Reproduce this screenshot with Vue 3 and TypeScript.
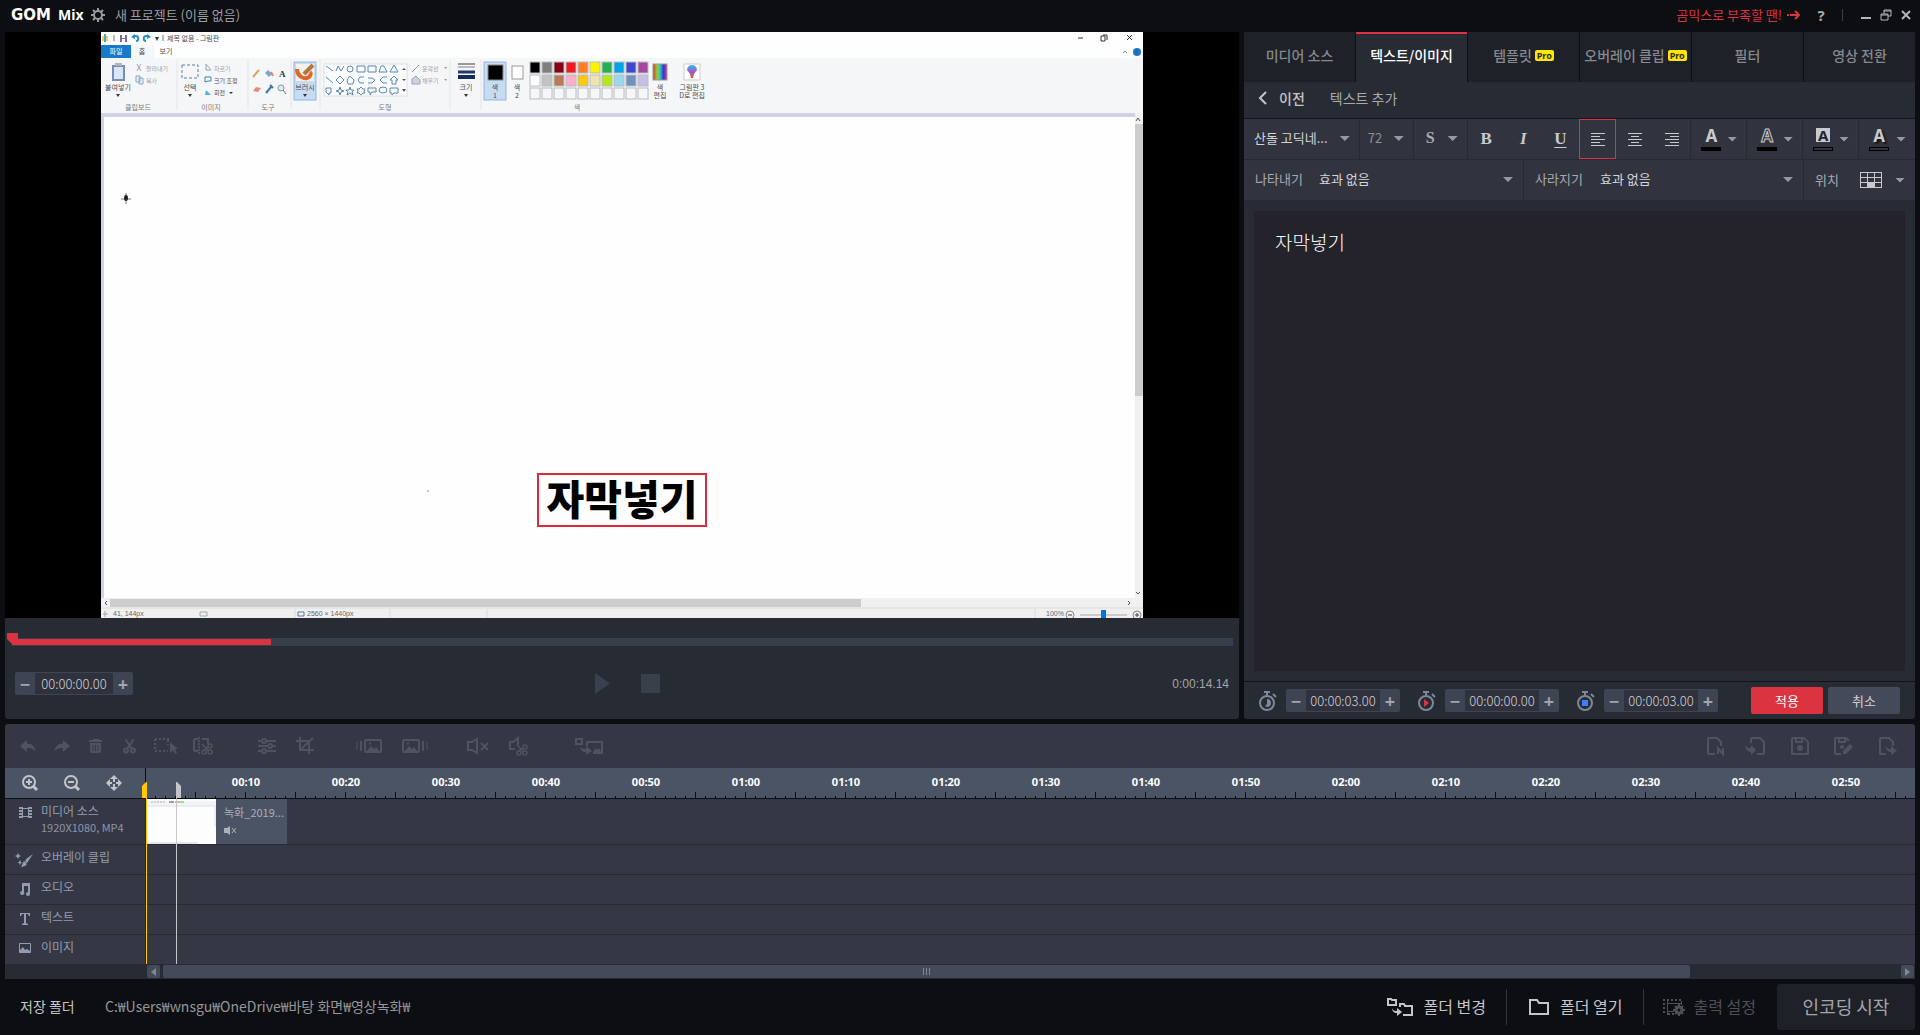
<script setup lang="ts">
import { ref } from 'vue'

interface Icon { w: number; h: number; body: string }

const scissors = '<circle cx="3" cy="11.5" r="2" /><circle cx="10" cy="11.5" r="2" /><path d="M4 10 10.500 0.500M9 10 2.500 0.500" />'
const smallScissors = '<g stroke-width="1.500"><circle cx="11" cy="16" r="2"/><circle cx="17" cy="16" r="2"/><circle cx="17" cy="10" r="2"/><path d="M9 8 16 15M10 15 15 10.500"/></g>'
const picture = '<rect x="1" y="1" width="16" height="12" rx="1"/><path class="fill" d="M3 12 7 7l3 3 2-2 3 4zM5 3.500h2v2H5z"/>'

const icons: Record<string, Icon> = {
  gear: { w: 14, h: 14, body: '<circle cx="7" cy="7" r="4" stroke-width="2"/><path stroke-width="2" d="M7 0v3M7 11v3M0 7h3M11 7h3M2 2l2 2M10 10l2 2M2 12l2-2M10 4l2-2"/>' },
  undo: { w: 16, h: 14, body: '<path class="fill" d="M0 7 7 1v3.500c5 0 8 3 8.500 8C13 9.500 11 9 7 9v4z"/>' },
  redo: { w: 16, h: 14, body: '<path class="fill" d="M16 7 9 1v3.500c-5 0-8 3-8.500 8C3 9.500 5 9 9 9v4z"/>' },
  trash: { w: 14, h: 14, body: '<path class="fill" d="M4 0h6v1h3v2H0V1h4zM1 4h11v8a2 2 0 0 1-2 2H3a2 2 0 0 1-2-2z"/><path class="cut" d="M4 6v6M6.500 6v6M9 6v6"/>' },
  scissors: { w: 14, h: 14, body: scissors },
  pick: { w: 24, h: 18, body: '<path stroke-dasharray="2 2" d="M1 2h14M1 14h13M1 2v12M14 3v5"/><path class="fill" d="M16 5v11l3-3 2 4 2-1-2-4h3z"/>' },
  split: { w: 20, h: 18, body: '<path d="M5 2H2a1 1 0 0 0-1 1v10a1 1 0 0 0 1 1h3M9 2h6v5"/><path stroke-dasharray="2 1" d="M6 0v18"/><g transform="translate(0 -1)">' + smallScissors + '</g>' },
  sliders: { w: 18, h: 16, body: '<path d="M0 3h4M8 3h10M0 8h10M14 8h4M0 13h4M8 13h10"/><circle cx="6" cy="3" r="2"/><circle cx="12" cy="8" r="2"/><circle cx="6" cy="13" r="2"/>' },
  crop: { w: 18, h: 18, body: '<path d="M4 0v13h14M0 4h13v13M4 13 17 1"/>' },
  fadeIn: { w: 26, h: 14, body: '<g transform="translate(8 0)">' + picture + '</g><path d="M5 2v10"/><path stroke-width="1" d="M1 3v8"/>' },
  fadeOut: { w: 26, h: 14, body: picture + '<path d="M21 2v10"/><path stroke-width="1" d="M25 3v8"/>' },
  mute: { w: 22, h: 16, body: '<path d="M1 4h4l5-3v14l-5-3H1zM14 5l7 7M21 5l-7 7"/>' },
  muteCut: { w: 20, h: 18, body: '<path d="M7 12H2V5h3l5-4v7"/>' + smallScissors },
  swap: { w: 28, h: 16, body: '<path d="M1 1h6v5H1zM12 8V4h15v11h-9"/><path class="fill" d="M5 9c2 2 4 2 6 2V8l6 5-6 4v-3c-3 0-5-1-6-5zM18 14l3-4 1 2 2-2 2 4z"/>' },
  docNew: { w: 18, h: 18, body: '<path d="M8 17H2a1 1 0 0 1-1-1V2a1 1 0 0 1 1-1h8l4 4v4M11 17v-6l5 6v-6"/>' },
  docIn: { w: 20, h: 18, body: '<path d="M6 6V2a1 1 0 0 1 1-1h8l4 4v11a1 1 0 0 1-1 1h-6"/><path class="fill" d="M0 8c2 3 4 3 6 3V8l5 5-5 5v-3c-3 0-5-2-6-7z"/>' },
  save: { w: 18, h: 18, body: '<path d="M2 1h11l4 4v11a1 1 0 0 1-1 1H2a1 1 0 0 1-1-1V2a1 1 0 0 1 1-1zM5 1v4h6V1"/><circle class="fill" cx="9" cy="11" r="3"/>' },
  saveAs: { w: 20, h: 18, body: '<path d="M7 17H2a1 1 0 0 1-1-1V2a1 1 0 0 1 1-1h10l3 3M5 1v4h6V1"/><circle class="fill" cx="8" cy="10" r="2"/><path class="fill" d="m9 14 7-7 3 3-7 7H9z"/>' },
  docOut: { w: 18, h: 18, body: '<path d="M7 17H2a1 1 0 0 1-1-1V2a1 1 0 0 1 1-1h8l4 4v4"/><path class="fill" d="M6 9c2 3 4 3 6 3V9l6 5-6 4v-3c-3 0-5-2-6-6z"/>' },
  zoomIn: { w: 16, h: 16, body: '<circle cx="7" cy="7" r="6"/><path stroke-width="3" d="m11 11 4 4"/><path d="M7 4v6M4 7h6"/>' },
  zoomOut: { w: 16, h: 16, body: '<circle cx="7" cy="7" r="6"/><path stroke-width="3" d="m11 11 4 4"/><path d="M4 7h6"/>' },
  spread: { w: 16, h: 16, body: '<path class="fill" d="M8 0 4 4h3v3h2V4h3zM8 16l-4-4h3V9h2v3h3zM0 8l4-4v3h2v2H4v3zM16 8l-4-4v3h-2v2h2v3z"/>' },
  film: { w: 13, h: 11, body: '<g stroke-width="1"><path d="M3.500 0v11M9.500 0v11M3 1.500h7M3 9.500h7"/><path stroke-width="2" d="M0 1h4M0 4h3M0 7h3M0 10h4M9 1h4M10 4h3M10 7h3M9 10h4" /></g>' },
  brush: { w: 18, h: 14, body: '<path class="fill" d="m18 1-7 5-1 3 2 1zM9 8l3 3c-1 2-4 3-6 3 1-1 1-4 3-6zM3 0l1 2 2 1-2 1-1 2-1-2-2-1 2-1zM5 7l1 2 1 0-1 1-1 2-1-2-2-1 2 0z"/>' },
  note: { w: 12, h: 13, body: '<path class="fill" d="M3 0h8v11a2 2 0 1 1-2-2V3H5v6a2 2 0 1 1-2-1z"/>' },
  type: { w: 12, h: 12, body: '<path class="fill" d="M1 0h10v3h-1l-1-2H7v9l2 1v1H3v-1l2-1V1H3L2 3H1z"/>' },
  image: { w: 12, h: 10, body: '<path stroke-width="1" d="M.5.5h11v9H.5z"/><path class="fill" d="M1 9V7l3-3 2 3 2-1 3 2v1z"/>' },
  folders: { w: 26, h: 18, body: '<path d="M1 1h3l1 1h4v5H1zM13 9V6h4l1 2h7v9h-9"/><path class="fill" d="M5 10c1 3 3 3 5 3v-3l5 4-5 4v-3c-3 0-5-2-5-5z"/>' },
  folder: { w: 20, h: 16, body: '<path d="M1 1h7l2 3h9v11H1z"/>' },
  output: { w: 22, h: 16, body: '<path stroke-width="1" d="M4.500 0v16M4 4.500h15M4 12.500h7M18.500 2v4"/><path stroke-dasharray="2 2" d="M1 0v16M4 1h16M5 15h6"/><circle cx="16" cy="11" r="3" stroke-width="3"/><path d="M16 5v3M16 14v3M10 11h3M19 11h3M12 7l2 2M18 13l2 2M20 7l-2 2M14 13l-2 2"/>' },
}

const tabs = [
  { label: '미디어 소스', pro: false },
  { label: '텍스트/이미지', pro: false },
  { label: '템플릿', pro: true },
  { label: '오버레이 클립', pro: true },
  { label: '필터', pro: false },
  { label: '영상 전환', pro: false },
]
const activeTab = ref('텍스트/이미지')

const alignments = [
  { name: '왼쪽 정렬', d: 'M0 1h14M0 4h9M0 7h14M0 10h9M0 13h14' },
  { name: '가운데 정렬', d: 'M0 1h14M3 4h8M0 7h14M3 10h8M0 13h14' },
  { name: '오른쪽 정렬', d: 'M0 1h14M5 4h9M0 7h14M5 10h9M0 13h14' },
]
const align = ref('왼쪽 정렬')

const colorTools = [
  { name: '글자 색', cls: 'plain', filled: true },
  { name: '윤곽선 색', cls: 'outlined', filled: true },
  { name: '배경 색', cls: 'boxed', filled: false },
  { name: '그림자 색', cls: 'shadowed', filled: false },
]

const caption = ref('자막넣기')
const position = ref('00:00:00.00')
const timers = ref([
  { name: '지속 시간', kind: 'half', value: '00:00:03.00' },
  { name: '시작 시간', kind: 'start', value: '00:00:00.00' },
  { name: '종료 시간', kind: 'end', value: '00:00:03.00' },
])

const toolGroups = [
  { cls: 'g34', items: [['undo', '실행 취소'], ['redo', '다시 실행'], ['trash', '삭제'], ['scissors', '자르기']] },
  { cls: 'g37', items: [['pick', '영역 선택'], ['split', '분할']] },
  { cls: 'g38', items: [['sliders', '조정'], ['crop', '크롭']] },
  { cls: 'g46', items: [['fadeIn', '페이드 인'], ['fadeOut', '페이드 아웃']] },
  { cls: 'g40', items: [['mute', '음소거'], ['muteCut', '오디오 분리']] },
  { cls: 'g40 far', items: [['swap', '교체']] },
  { cls: 'g39', items: [['docNew', '새 프로젝트'], ['docIn', '불러오기']] },
  { cls: 'g44', items: [['save', '저장'], ['saveAs', '다른 이름으로 저장'], ['docOut', '내보내기']] },
]

const marks = Array.from({ length: 17 }, (_, i) => {
  const s = (i + 1) * 10
  return `${String(Math.floor(s / 60)).padStart(2, '0')}:${String(s % 60).padStart(2, '0')}`
})

const tracks = [
  { icon: 'brush', label: '오버레이 클립' },
  { icon: 'note', label: '오디오' },
  { icon: 'type', label: '텍스트' },
  { icon: 'image', label: '이미지' },
]

const palette = [
  ['#000', '#7f7f7f', '#880015', '#ed1c24', '#ff7f27', '#fff200', '#22b14c', '#00a2e8', '#3f48cc', '#a349a4'],
  ['#fff', '#c3c3c3', '#b97a57', '#ffaec9', '#ffc90e', '#efe4b0', '#b5e61d', '#99d9ea', '#7092be', '#c8bfe7'],
  ['#f6f7f8', '#f6f7f8', '#f6f7f8', '#f6f7f8', '#f6f7f8', '#f6f7f8', '#f6f7f8', '#f6f7f8', '#f6f7f8', '#f6f7f8'],
]
</script>

<template>
  <div class="app">
    <header class="titlebar">
      <div class="brand"><b class="gom">GOM</b><b class="mix">Mix</b></div>
      <button class="bare gear" aria-label="설정"><svg class="ico" width="14" height="14" viewBox="0 0 14 14" v-html="icons.gear.body" /></button>
      <h1>새 프로젝트 (이름 없음)</h1>
      <a class="promo" href="#">곰믹스로 부족할 땐!
        <svg width="13" height="10" viewBox="0 0 13 10"><path d="M0 5h2M3 5h9M8 1l4 4-4 4" fill="none" stroke="#dc3341" stroke-width="2" /></svg>
      </a>
      <button class="bare help" aria-label="도움말">?</button>
      <i class="rule" />
      <div class="winbtns">
        <button class="bare" aria-label="최소화"><svg width="12" height="12" viewBox="0 0 12 12"><path d="M1 9h10" stroke-width="2" /></svg></button>
        <button class="bare" aria-label="이전 크기로"><svg width="12" height="12" viewBox="0 0 12 12"><path d="M4 5V1h7v6H8M1 5h7v6H1zM4 2h7M1 6h7" /></svg></button>
        <button class="bare" aria-label="닫기"><svg width="12" height="12" viewBox="0 0 12 12"><path d="m2 2 8 8M10 2l-8 8" stroke-width="2" /></svg></button>
      </div>
    </header>

    <main class="workspace">
      <section class="player">
        <div class="stage">
          <svg class="frame" viewBox="101 32 1042 586">
            <rect x="101" y="32" width="1042" height="586" fill="#fefefe" />
            <!-- window title row -->
            <path d="M102 36h6v5h-6z" fill="#f2c66b" /><path d="M104 34h2v8h-2z" fill="#4aa3c9" />
            <path d="M114 35v6M163 35v6" stroke="#777" stroke-width="1" />
            <path d="M120 35h7v7h-7z" fill="#7b68a8" /><path d="M122 35h3v3h-3zM122 39h3v3h-3z" fill="#fff" />
            <path d="M133 36h3c3 0 3 5 0 5M149 36h-3c-3 0-3 5 0 5" fill="none" stroke="#2390d0" stroke-width="2" />
            <path d="M131 37l4-3v5zM151 37l-4-3v5z" fill="#2390d0" /><path d="M155 37h4l-2 4z" fill="#333" />
            <text x="167" y="41" class="t7">제목 없음 - 그림판</text>
            <path d="M1078 38h5M1101 36h4v5h-4zM1103 35h4v5M1127 35l5 5M1132 35l-5 5" fill="none" stroke="#333" />
            <path d="M1123 53l2-2 2 2" fill="none" stroke="#888" /><circle cx="1137" cy="52" r="4" fill="#1979ca" /><text x="1135" y="54" class="t6" fill="#fff">?</text>
            <rect x="101" y="45" width="30" height="13" fill="#1979ca" />
            <text x="116" y="54" class="t7 mid" style="fill:#fff">파일</text>
            <rect x="131" y="45" width="23" height="13" fill="#f5f6f7" />
            <text x="142" y="54" class="t7 mid">홈</text><text x="166" y="54" class="t7 mid">보기</text>
            <!-- ribbon -->
            <rect x="101" y="58" width="1042" height="56" fill="#f5f6f7" />
            <path d="M177 60v50M248 60v50M291 60v50M320 60v50M450 60v50M481 60v50" stroke="#e4e6ea" />
            <rect x="112" y="65" width="13" height="16" fill="#7b8fb5" /><rect x="114" y="67" width="9" height="12" fill="#dbe6f8" /><path d="M115 63h7v3h-7z" fill="#aeb6c4" />
            <text x="118" y="90" class="t7 mid">붙여넣기</text><path d="M116 94h4l-2 3z" fill="#333" />
            <path d="M137 64l4 7M141 64l-4 7" stroke="#98a3b3" /><text x="146" y="71" class="t6 dim">잘라내기</text>
            <path d="M136 76h4v6h-4zM139 78h4v6h-4z" fill="#e5effa" stroke="#8ea6c4" /><text x="146" y="83" class="t6 dim">복사</text>
            <text x="138" y="110" class="t7 mid gr">클립보드</text>
            <rect x="182" y="65" width="16" height="13" fill="none" stroke="#5b7fa6" stroke-dasharray="3 2" />
            <text x="190" y="90" class="t7 mid">선택</text><path d="M188 94h4l-2 3z" fill="#333" />
            <path d="M206 64v6h5M206 64l5 6" stroke="#8fa5c2" fill="none" /><text x="214" y="71" class="t6 dim">자르기</text>
            <path d="M205 82v-5h6v4h-3z" fill="none" stroke="#3d84bd" /><text x="214" y="83" class="t6">크기 조정</text>
            <path d="M205 95l1-5 5 5z" fill="#5ab0e0" /><text x="214" y="95" class="t6">회전</text><path d="M229 92h4l-2 2z" fill="#333" />
            <text x="211" y="110" class="t7 mid gr">이미지</text>
            <path d="M253 77l6-7" stroke="#d6a75a" stroke-width="2" /><path d="M265 73l3-3 4 4-3 3z" fill="#7aa7cf" /><path d="M271 72l2 4" stroke="#d78a64" stroke-width="2" />
            <text x="279" y="77" style="font:bold 9px 'Liberation Serif',serif;fill:#25384f">A</text>
            <path d="M253 91l3-4 5 1-3 4z" fill="#e48a86" /><path d="M266 93l5-6M270 85l3 3" stroke="#3c76ae" stroke-width="2" />
            <circle cx="281" cy="88" r="3" fill="#dcecf6" stroke="#8a98a8" /><path d="M283 90l3 4" stroke="#8a7350" />
            <text x="268" y="110" class="t7 mid gr">도구</text>
            <rect x="294" y="62" width="22" height="38" fill="#c6dcf3" stroke="#93b5da" />
            <rect x="296" y="64" width="18" height="17" fill="#f4f0ea" />
            <path d="M297 69c0 7 6 10 10 9s4-5 3-6" fill="none" stroke="#e0662a" stroke-width="4" /><path d="M304 74l9-9" stroke="#b0763c" stroke-width="4" />
            <text x="305" y="90" class="t7 mid">브러시</text><path d="M303 94h4l-2 3z" fill="#333" />
            <rect x="324" y="64" width="83" height="32" fill="#fafbfc" stroke="#dcdfe4" />
            <g fill="none" stroke="#5c88ad">
              <path d="M326 66l7 5M336 71l2-5 3 5 3-5M357 66h8v6h-8zM368 66h8v6h-8zM379 72l2-6h3l3 6zM390 72l4-7 4 7z" /><circle cx="350" cy="69" r="3" />
              <path d="M326 77l7 6M340 76l4 4-4 4-4-4zM347 80l3-4 4 4-1 4h-5zM364 77h-4l-2 3 2 3h4M368 78h4l3 2-3 3h-4M387 77h-4l-3 3 3 3h4M394 76l4 4h-2v4h-4v-4h-2z" />
              <path d="M326 88h5v5h-2v2l-3-3zM340 87l1 3 3 1-3 1-1 3-1-3-3-1 3-1zM350 87l1 3h3l-2 2 1 3-3-2-3 2 1-3-2-2h3zM361 87l2 2h2l-1 2 1 2h-2l-2 2-2-2h-2l1-2-1-2h2zM368 88h8v4h-4l-2 3v-3h-2zM390 88h8v5h-4l-2 2v-2h-2z" /><ellipse cx="383" cy="90" rx="4" ry="3" />
            </g>
            <path d="M402 70l2-2 2 2zM402 79h4l-2 2zM402 89h4l-2 3z" fill="#555" />
            <path d="M412 72l7-7" stroke="#8ba1b8" /><text x="422" y="71" class="t6 dim">윤곽선</text>
            <path d="M412 79l4-3 4 4v4h-8z" fill="#ccd3dc" stroke="#9aa6b4" /><text x="422" y="83" class="t6 dim">채우기</text>
            <path d="M444 67h3l-1 2zM444 79h3l-1 2z" fill="#999" />
            <text x="385" y="110" class="t7 mid gr">도형</text>
            <path d="M458 64h17" stroke="#999" stroke-width="2" /><path d="M458 67h17" stroke="#bbb" stroke-width="2" /><path d="M458 72h17" stroke="#1e3a66" stroke-width="3" /><path d="M458 77h17" stroke="#132b55" stroke-width="4" />
            <text x="466" y="90" class="t7 mid">크기</text><path d="M464 94h4l-2 3z" fill="#333" />
            <rect x="484" y="62" width="22" height="38" fill="#c6dcf3" stroke="#93b5da" /><rect x="488" y="65" width="15" height="15" stroke="#8a8a8a" />
            <text x="495" y="90" class="t7 mid">색</text><text x="495" y="98" class="t7 mid">1</text>
            <rect x="512" y="66" width="11" height="13" fill="#fff" stroke="#999" />
            <text x="517" y="90" class="t7 mid">색</text><text x="517" y="98" class="t7 mid">2</text>
            <g v-for="(row, r) in palette" :key="r">
              <rect v-for="(c, i) in row" :key="i" :x="530 + i * 12" :y="62 + r * 13" width="10" height="11" :fill="c" stroke="#b8bbc0" />
            </g>
            <text x="577" y="110" class="t7 mid gr">색</text>
            <defs>
              <linearGradient id="rainbow"><stop offset="0" stop-color="#d33" /><stop offset=".3" stop-color="#9c3" /><stop offset=".5" stop-color="#2cc" /><stop offset=".75" stop-color="#43c" /><stop offset="1" stop-color="#c39" /></linearGradient>
              <linearGradient id="cone" x2="0" y2="1"><stop offset="0" stop-color="#2bbdf0" /><stop offset=".5" stop-color="#a05ad0" /><stop offset="1" stop-color="#e8542c" /></linearGradient>
            </defs>
            <rect x="653" y="64" width="14" height="16" fill="url(#rainbow)" stroke="#999" />
            <text x="660" y="90" class="t7 mid">색</text><text x="660" y="98" class="t7 mid">편집</text>
            <rect x="684" y="64" width="16" height="16" fill="#fff" stroke="#ccc" /><path d="M687 70a5 5 0 0 1 10 0l-3 4-1 4h-2l-1-4z" fill="url(#cone)" />
            <text x="692" y="90" class="t7 mid">그림판 3</text><text x="692" y="98" class="t7 mid">D로 편집</text>
            <!-- canvas edge and scroll bars -->
            <path d="M101 113h1034v4H104v481h-3z" fill="#cdd5e4" />
            <path d="M1135 114h8v484h-8zM101 598h1042v20H101z" fill="#f0f0f0" />
            <path d="M1135 124h8v272h-8zM110 599h751v8H110z" fill="#cdcdcd" />
            <path d="M101 608h1042M295 609v9M390 609v9M487 609v9M1035 609v9" stroke="#dcdcdc" />
            <path d="M1136 121l2-3 2 3M1136 592l2 2 2-2M107 601l-2 2 2 2M1128 601l2 2-2 2" fill="none" stroke="#555" />
            <path d="M103 614h5M105 611v6M200 612h7v4h-7z" fill="none" stroke="#9aa" />
            <text x="113" y="616" class="status">41, 144px</text><path d="M298 612h6v4h-6z" fill="none" stroke="#579" />
            <text x="307" y="616" class="status">2560 × 1440px</text>
            <text x="1046" y="616" class="status">100%</text>
            <circle cx="1070" cy="615" r="4" fill="#eee" stroke="#888" /><circle cx="1137" cy="615" r="4" fill="#eee" stroke="#888" />
            <path d="M1068 615h4M1135 615h4M1137 613v4" stroke="#444" /><path d="M1080 615h47" stroke="#ccc" stroke-width="2" /><rect x="1101" y="610" width="5" height="8" fill="#0078d7" />
            <path d="M126 193v11M121 199h10" stroke="#777" /><ellipse cx="126" cy="198" rx="2" ry="3" fill="#222" /><path d="M428 490v2" stroke="#888" />
          </svg>
          <div class="subtitle">자막넣기</div>
        </div>
        <div class="seek"><div class="track"><div class="played" /></div><svg class="head" width="11" height="12" viewBox="0 0 11 12"><path d="M0 0h11v6l-5 6L0 6z" fill="#dc3341" /></svg></div>
        <div class="transport">
          <div class="stepper">
            <button aria-label="이전 프레임">−</button>
            <input v-model="position" aria-label="현재 위치" />
            <button aria-label="다음 프레임">+</button>
          </div>
          <div class="playbtns">
            <button class="bare" aria-label="재생"><svg width="15" height="21" viewBox="0 0 15 21"><path d="M0 0 15 10.500 0 21z" fill="#3a404d" /></svg></button>
            <button class="bare" aria-label="정지"><svg width="19" height="19" viewBox="0 0 19 19"><path d="M0 0h19v19H0z" fill="#3a3f4c" /></svg></button>
          </div>
          <span class="total">0:00:14.14</span>
        </div>
      </section>

      <section class="editor">
        <nav class="tabs">
          <button v-for="t in tabs" :key="t.label" :class="{ on: t.label === activeTab }" @click="activeTab = t.label">
            {{ t.label }}<span v-if="t.pro" class="pro">Pro</span>
          </button>
        </nav>
        <div class="crumb">
          <button class="bare back"><svg width="9" height="14" viewBox="0 0 9 14"><path d="M8 1 2 7l6 6" fill="none" stroke="#c4c5c8" stroke-width="2" /></svg>이전</button>
          <span>텍스트 추가</span>
        </div>
        <div class="bar styling">
          <label class="pick font"><select aria-label="글꼴"><option>산돌 고딕네...</option></select></label>
          <label class="pick size"><select aria-label="글자 크기"><option>72</option></select></label>
          <label class="pick style"><select aria-label="글자 스타일"><option>S</option></select></label>
          <div class="formats">
            <button class="serif" aria-label="굵게">B</button>
            <button class="serif it" aria-label="기울임">I</button>
            <button class="serif" aria-label="밑줄"><u>U</u></button>
            <button v-for="a in alignments" :key="a.name" :aria-label="a.name" :class="{ on: a.name === align }" @click="align = a.name">
              <svg width="14" height="14" viewBox="0 0 14 14" shape-rendering="crispEdges"><path :d="a.d" stroke="#c9cacd" stroke-width="1" /></svg>
            </button>
          </div>
          <button v-for="c in colorTools" :key="c.name" class="tint" :aria-label="c.name">
            <span class="glyph"><b :class="c.cls">A</b><i :class="{ filled: c.filled }" /></span>
            <span class="arrow" />
          </button>
        </div>
        <div class="bar effects">
          <label class="pick effect"><span>나타내기</span><select><option>효과 없음</option></select></label>
          <label class="pick effect"><span>사라지기</span><select><option>효과 없음</option></select></label>
          <button class="place">위치
            <svg width="22" height="16" viewBox="0 0 22 16" shape-rendering="crispEdges"><path d="M0 0h22v16H0z" fill="#c9cacd" /><path d="M1 1h6v4H1zM8 1h6v4H8zM15 1h6v4h-6zM1 6h6v4H1zM8 6h6v4H8zM15 6h6v4h-6zM1 11h6v4H1zM15 11h6v4h-6z" fill="#31343f" /></svg>
            <span class="arrow" />
          </button>
        </div>
        <div class="writing"><textarea v-model="caption" aria-label="자막 내용" spellcheck="false" /></div>
        <div class="timing">
          <template v-for="t in timers" :key="t.name">
            <svg class="watch" width="19" height="20" viewBox="0 0 19 20">
              <g fill="none" stroke="#7f8798" stroke-width="2"><circle cx="9" cy="12" r="7" /><path d="M6 1h6M9 1v3M15 3l3 3" /></g>
              <path v-if="t.kind === 'half'" d="M9 8a4 4 0 0 1 0 8l-2-1 2-2z" fill="#7f8798" />
              <path v-else-if="t.kind === 'start'" d="m7 8 5 4-5 4z" fill="#dc3341" />
              <path v-else d="M6 9h6v6H6z" fill="#3f7cff" />
            </svg>
            <div class="stepper small">
              <button :aria-label="t.name + ' 줄이기'">−</button>
              <input v-model="t.value" :aria-label="t.name" />
              <button :aria-label="t.name + ' 늘리기'">+</button>
            </div>
          </template>
          <button class="apply">적용</button>
          <button class="cancel">취소</button>
        </div>
      </section>
    </main>

    <section class="timeline">
      <div class="tools">
        <div v-for="g in toolGroups" :key="g.items[0][0]" class="group" :class="g.cls">
          <button v-for="[n, label] in g.items" :key="n" class="bare" :aria-label="label">
            <svg class="ico" :width="icons[n].w" :height="icons[n].h" :viewBox="`0 0 ${icons[n].w} ${icons[n].h}`" v-html="icons[n].body" />
          </button>
        </div>
      </div>
      <div class="rulerrow">
        <div class="zooms">
          <button v-for="[n, label] in [['zoomIn', '확대'], ['zoomOut', '축소'], ['spread', '맞춤']]" :key="n" class="bare" :aria-label="label">
            <svg class="ico" width="16" height="16" viewBox="0 0 16 16" v-html="icons[n].body" />
          </button>
        </div>
        <div class="ruler"><span v-for="m in marks" :key="m">{{ m }}</span></div>
      </div>
      <div class="row media">
        <div class="label">
          <svg class="ico" width="13" height="11" viewBox="0 0 13 11" v-html="icons.film.body" />
          <div>미디어 소스<small>1920X1080, MP4</small></div>
        </div>
        <div class="lane">
          <div class="clip">
            <svg class="thumb" width="69" height="45" viewBox="0 0 69 45"><path d="M0 0h69v45H0z" fill="#fdfdfe" /><path d="M0 2h69v4H0z" fill="#f1f3f6" /><path d="M4 3h15" stroke="#aab" stroke-dasharray="2 1" /><path d="M22 3h5" stroke="#456" /><path d="M28 3h5" stroke="#d64" /><path d="M33 3h4" stroke="#6b4" /><path d="M0 7h69" stroke="#d6dde8" /><path d="M0 44h50" stroke="#ccc" /><path d="M68 8v20" stroke="#ddd" /></svg>
            <div class="clipinfo">녹화_2019...
              <svg width="13" height="9" viewBox="0 0 13 9"><path d="M0 2h3l3-2v9L3 7H0z" fill="#a9afbb" /><path d="m8 2 4 5M12 2 8 7" stroke="#a9afbb" /></svg>
            </div>
          </div>
        </div>
      </div>
      <div v-for="t in tracks" :key="t.label" class="row">
        <div class="label">
          <svg class="ico" :width="icons[t.icon].w" :height="icons[t.icon].h" :viewBox="`0 0 ${icons[t.icon].w} ${icons[t.icon].h}`" v-html="icons[t.icon].body" />
          <div>{{ t.label }}</div>
        </div>
        <div class="lane" />
      </div>
      <div class="marker now" /><div class="marker end" />
      <div class="scroll">
        <button class="bare" aria-label="왼쪽으로"><svg width="5" height="8" viewBox="0 0 5 8"><path d="M5 0v8L0 4z" fill="#7f8798" /></svg></button>
        <div class="rail"><div class="thumbbar"><i /><i /><i /></div></div>
        <button class="bare" aria-label="오른쪽으로"><svg width="5" height="8" viewBox="0 0 5 8"><path d="M0 0v8l5-4z" fill="#7f8798" /></svg></button>
      </div>
    </section>

    <footer class="footer">
      <span class="saveto">저장 폴더</span>
      <span class="path">C:₩Users₩wnsgu₩OneDrive₩바탕 화면₩영상녹화₩</span>
      <button class="bare act first"><svg class="ico" width="26" height="18" viewBox="0 0 26 18" v-html="icons.folders.body" /><span>폴더 변경</span></button>
      <button class="bare act"><svg class="ico" width="20" height="16" viewBox="0 0 20 16" v-html="icons.folder.body" /><span>폴더 열기</span></button>
      <button class="bare act off"><svg class="ico" width="22" height="16" viewBox="0 0 22 16" v-html="icons.output.body" /><span>출력 설정</span></button>
      <button class="encode">인코딩 시작</button>
    </footer>
  </div>
</template>

<style>
body { background: #0d0e12; }
.ico { fill: none; stroke: currentColor; stroke-width: 2; overflow: visible; flex: none; }
.ico .fill { fill: currentColor; stroke: none; }
.ico .cut { stroke: #353844; stroke-width: 1; }
</style>

<style scoped>
* { box-sizing: border-box; }
.app {
  min-height: 100vh; display: flex; flex-direction: column; background: #0d0e12; color: #c4c5c8;
  font: 13px/20px "Noto Sans CJK KR", "Noto Sans", sans-serif;
}
button, input, select, textarea { font: inherit; color: inherit; border: 0; margin: 0; padding: 0; background: none; border-radius: 0; outline: 0; }
.bare { display: flex; align-items: center; justify-content: center; }

.titlebar { display: flex; align-items: center; height: 32px; flex: none; padding: 0 8px 2px 11px; }
.brand { display: flex; align-items: baseline; color: #fff; height: 20px; }
.gom { font: 700 15px/20px "DejaVu Sans", sans-serif; width: 47px; }
.mix { font: 700 14px/20px "Noto Sans", sans-serif; width: 33px; }
.gear { color: #9a9ba0; }
h1 { font-size: 13px; line-height: 20px; font-weight: 400; margin: 0 auto 0 10px; color: #9c9da3; }
.promo { color: #dc3341; text-decoration: none; display: flex; align-items: center; gap: 5px; }
.help { margin-left: 16px; font: 700 15px/20px "Noto Sans", sans-serif; width: 10px; color: #a9aaae; }
.rule { width: 1px; height: 12px; background: #3c3e45; margin: 0 17px 0 16px; }
.winbtns { display: flex; gap: 8px; }
.winbtns svg { fill: none; stroke: #b4b5b9; }

.workspace { flex: 1; display: grid; grid-template-columns: minmax(0, 1234fr) minmax(0, 671fr); gap: 5px; padding: 0 5px; }
.player, .editor { background: #272b33; display: flex; flex-direction: column; border-radius: 0 0 3px 3px; min-width: 0; }
.stage { flex: 1; position: relative; background: #000; min-height: 300px; }
.frame { position: absolute; inset: 0; width: 100%; height: 100%; }
.frame text { font-family: "Noto Sans CJK KR", sans-serif; fill: #4a4c50; }
.frame .t7 { font-size: 7px; }
.frame .t6 { font-size: 6px; }
.frame .status { font: 7px "Liberation Sans", sans-serif; fill: #66686c; }
.frame .mid { text-anchor: middle; }
.frame .dim { fill: #a0a3a8; }
.frame .gr { fill: #77797d; }
.subtitle {
  position: absolute; left: 50%; bottom: 91px; transform: translateX(-50%); border: 2px solid #dc2a3c; width: 170px; height: 54px;
  color: #000; text-align: center; font-size: 41px; line-height: 45px; font-weight: 900; white-space: nowrap;
}
.seek { position: relative; padding: 20px 6px 26px 7px; }
.track { height: 8px; background: #383e4b; padding: 1px 0; }
.played { width: 21.2%; height: 6px; background: #dc3341; }
.head { position: absolute; left: 2px; top: 15px; }
.transport { display: flex; align-items: center; justify-content: space-between; padding: 0 10px 24px; }
.stepper { display: flex; height: 23px; width: 118px; background: #3e4454; border-radius: 2px; flex: none; }
.stepper button { width: 20px; color: #a3a5ab; font: 700 18px/22px "Noto Sans", sans-serif; flex: none; }
.stepper input { flex: 1; min-width: 0; text-align: center; background: #2f323d; margin: 1px 0; font-size: 13px; font-weight: 300; color: #d0d1d5; }
.stepper.small { width: 114px; }
.playbtns { display: flex; align-items: center; gap: 31px; padding-left: 10px; }
.total { width: 118px; text-align: right; font: 12px/20px "Liberation Sans", sans-serif; color: #a3a5ab; }

.tabs { display: flex; gap: 1px; background: #0d0e12; }
.tabs button { flex: 1; height: 50px; background: #1e2128; color: #86888e; font-size: 14px; font-weight: 500; white-space: nowrap; display: flex; align-items: center; justify-content: center; gap: 3px; padding-bottom: 4px; min-width: 0; }
.tabs .on { background: #272b33; color: #fff; box-shadow: inset 0 2px #dc3341; }
.pro { background: #ffe800; color: #2b2b20; font: 700 9px/11px "Noto Sans", sans-serif; border-radius: 2px; width: 19px; text-align: center; }
.crumb { display: flex; align-items: center; height: 37px; border-bottom: 1px solid #14161b; padding: 0 14px 4px; gap: 25px; font-size: 14px; color: #a7a9ae; }
.back { gap: 12px; color: #c4c5c8; font-weight: 500; }
.bar { display: grid; height: 41px; background: #31343f; border-bottom: 1px solid #272a32; }
.styling { grid-template-columns: minmax(0, 116fr) repeat(2, minmax(0, 54fr)) minmax(0, 224fr) repeat(4, minmax(0, 56fr)); }
.effects { grid-template-columns: repeat(2, minmax(0, 280fr)) minmax(0, 111fr); }
.bar > * { border-right: 1px solid #272a32; }
.bar > :last-child { border-right: 0; }
.pick { position: relative; display: flex; align-items: center; min-width: 0; }
.pick select { appearance: none; width: 100%; height: 40px; padding-left: 10px; padding-bottom: 2px; cursor: pointer; color: #d4d5d8; min-width: 0; }
.pick option { background: #31343f; }
.pick::after, .arrow { content: ""; width: 10px; height: 5px; background: #9499a6; clip-path: polygon(0 0, 100% 0, 50% 100%); flex: none; }
.pick::after { position: absolute; right: 9px; top: 17px; pointer-events: none; }
.size select { padding-left: 8px; color: #8c8f96; }
.style select { padding-left: 12px; font: 700 16px/20px "Liberation Serif", serif; color: #a9abb0; }
.formats { display: flex; min-width: 0; }
.formats button { flex: 1; border: 1px solid transparent; height: 40px; display: flex; align-items: center; justify-content: center; color: #c9cacd; }
.formats .on { border-color: #dc3341; }
.formats .serif { font: 700 17px/20px "Liberation Serif", serif; }
.formats .it { font-style: italic; }
.formats u { text-underline-offset: 3px; }
.tint { min-width: 0; display: flex; align-items: center; justify-content: space-between; }
.bar .tint { padding: 0 9px 0 10px; }
.glyph { display: flex; flex-direction: column; align-items: center; gap: 3px; }
.glyph b { font: 700 17px/16px "Noto Sans", sans-serif; color: #c9cacd; width: 14px; text-align: center; }
.glyph i { width: 20px; height: 4px; border: 1px solid #000; }
.glyph .filled { background: #000; }
.glyph .outlined { color: #31343f; -webkit-text-stroke: 1px #c9cacd; }
.glyph .boxed { background: #c9cacd; color: #23252d; font-size: 15px; line-height: 14px; margin-bottom: 2px; }
.glyph .shadowed { text-shadow: 2px 2px 2px #111; }
.effect span { width: 65px; padding: 0 0 2px 11px; flex: none; color: #a7a9ae; }
.effect:nth-child(2) span { width: 66px; }
.pick.effect::after { right: 10px; }
.place { min-width: 0; display: flex; align-items: center; justify-content: space-between; color: #a7a9ae; }
.bar .place { padding: 0 10px 0 11px; }
.place svg { margin-left: 8px; }
.writing { flex: 1; display: flex; padding: 10px; }
.writing textarea { flex: 1; width: 100%; resize: none; background: #24232c; color: #fff; font-size: 19px; font-weight: 300; line-height: 24px; padding: 19px 21px; }
.timing { display: flex; align-items: center; height: 38px; border-top: 1px solid #121419; padding: 0 15px 0 14px; }
.watch { flex: none; margin-right: 9px; }
.timing .stepper { margin-right: 17px; }
.apply, .cancel { width: 72px; height: 27px; border-radius: 2px; flex: none; }
.timing .apply { background: #dc3341; color: #fff; margin-left: auto; margin-right: 5px; }
.timing .cancel { background: #444a59; color: #d0d1d5; }

.timeline { position: relative; margin: 5px 5px 0; background: #353844; flex: none; border-radius: 3px 3px 0 0; overflow: hidden; }
.tools { display: flex; height: 44px; padding: 0 5px 0 6px; color: #50535f; }
.group { display: flex; }
.g34 button { width: 34px; }
.g37 button { width: 37px; }
.g38 { margin-left: 27px; }
.g38 button { width: 38px; }
.g46 { margin-left: 22px; }
.g46 button { width: 46px; }
.g40 { margin-left: 20px; }
.g40 button { width: 40px; }
.far { margin-left: 31px; }
.g39 { margin-left: auto; margin-right: 4px; }
.g39 button { width: 39px; }
.g44 button { width: 44px; }
.rulerrow { display: flex; height: 31px; background: #4b5464; border-bottom: 1px solid #0d0e12; }
.zooms { display: flex; width: 141px; flex: none; border-right: 1px solid #0d0e12; padding-left: 4px; color: #c4c5c8; }
.zooms button { width: 42px; }
.ruler {
  flex: 1; display: flex; overflow: hidden; padding-left: 50px; color: #fff; font: 700 11px/27px "Noto Sans", sans-serif;
  background: linear-gradient(90deg, #0d0e12 1px, transparent 1px) 49px bottom / 50px 6px repeat-x, linear-gradient(90deg, #0d0e12 1px, transparent 1px) 9px bottom / 10px 2px repeat-x;
}
.ruler span { width: 100px; flex: none; text-align: center; }
.row { display: flex; height: 30px; border-bottom: 1px solid #272a32; }
.row:nth-last-child(4) { border-bottom: 0; height: 29px; }
.media { height: 46px; }
.label { display: flex; width: 141px; flex: none; border-right: 1px solid #272a32; padding-top: 2px; color: #929bb0; font-size: 12px; line-height: 20px; }
.label svg { margin: 6px 0 0 14px; }
.label div { margin-left: auto; width: 104px; white-space: nowrap; }
.label svg[width="18"] { margin-left: 10px; }
.label small { display: block; font-size: 11px; line-height: 12px; color: #8c94a8; }
.lane { flex: 1; }
.clip { display: flex; margin-left: 1px; width: 140px; background: #4b5464; }
.thumb { flex: none; }
.clipinfo { padding: 4px 0 0 8px; font-size: 11px; line-height: 18px; color: #a9afbb; white-space: nowrap; }
.clipinfo svg { display: block; margin-top: 5px; }
.marker { position: absolute; top: 58px; height: 182px; width: 1px; background: currentColor; }
.marker::before { content: ""; position: absolute; top: 0; width: 5px; height: 16px; background: currentColor; }
.now { left: 141px; color: #ffc800; }
.now::before { right: 0; clip-path: polygon(0 4px, 4px 0, 5px 0, 5px 100%, 0 100%); }
.end { left: 171px; color: #c4c5c8; }
.end::before { left: 0; clip-path: polygon(0 0, 1px 0, 5px 4px, 5px 100%, 0 100%); }
.scroll { display: flex; height: 15px; padding: 1px 1px 1px 142px; gap: 3px; background: #272b33; }
.scroll button { width: 13px; background: #444a59; border-radius: 2px; flex: none; }
.rail { flex: 1; }
.thumbbar { width: 88%; height: 13px; border-radius: 2px; background: #444a59; display: flex; align-items: center; justify-content: center; gap: 2px; }
.thumbbar i { width: 1px; height: 7px; background: #7f8798; }

.footer { display: flex; align-items: center; height: 56px; flex: none; padding: 0 5px 0 20px; font-size: 14px; }
.footer span { padding-bottom: 2px; }
.saveto { width: 85px; flex: none; }
.path { color: #94969b; white-space: nowrap; }
.act { height: 36px; gap: 11px; padding: 0 20px 0 22px; font-size: 16px; border-left: 1px solid #30333c; white-space: nowrap; }
.first { border-left: 0; margin-left: auto; }
.off { color: #4e5057; gap: 9px; padding: 0 21px 0 19px; }
.encode { width: 138px; height: 46px; background: #1e2128; border-radius: 3px; font-size: 18px; color: #a3a5ab; flex: none; padding-bottom: 2px; }
</style>
